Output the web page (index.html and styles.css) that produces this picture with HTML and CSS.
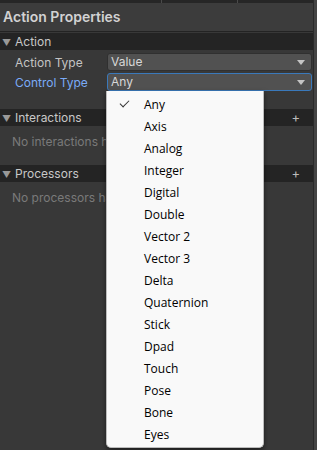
FILE: index.html
```html
<!DOCTYPE html>
<html lang="en">
<head>
  <meta charset="UTF-8" />
  <title>Action Properties</title>
  <link rel="stylesheet" href="styles.css">
</head>
<body>

<div class="window">
  <div class="inspector">
    <div class="tabstrip"><span></span><span></span></div>
    <div class="title">Action Properties</div>

    <div class="foldout">
      <span class="arrow">&#9660;</span>Action
    </div>
    <div class="row">
      <span class="label">Action Type</span>
      <div class="field">Value<span class="caret"></span></div>
    </div>
    <div class="row">
      <span class="label focused">Control Type</span>
      <div class="field focused">Any<span class="caret"></span></div>
    </div>

    <div class="foldout gap">
      <span class="arrow">&#9660;</span>Interactions
      <span class="plus">+</span>
    </div>
    <div class="empty">No interactions have been added.</div>

    <div class="foldout">
      <span class="arrow">&#9660;</span>Processors
      <span class="plus">+</span>
    </div>
    <div class="empty">No processors have been added.</div>
  </div>
  <div class="scrollbar"></div>

  <ul class="menu">
    <li class="checked">Any</li>
    <li>Axis</li>
    <li>Analog</li>
    <li>Integer</li>
    <li>Digital</li>
    <li>Double</li>
    <li>Vector 2</li>
    <li>Vector 3</li>
    <li>Delta</li>
    <li>Quaternion</li>
    <li>Stick</li>
    <li>Dpad</li>
    <li>Touch</li>
    <li>Pose</li>
    <li>Bone</li>
    <li>Eyes</li>
  </ul>
</div>

</body>
</html>
```

FILE: styles.css
```css
body {
  margin: 0;
  background: #383838;
  font-family: Inter, "Noto Sans", sans-serif;
  font-size: 12px;
  color: #c4c4c4;
}
.window {
  position: relative;
  display: flex;
  width: 317px;
  height: 450px;
  overflow: hidden;
}
.inspector {
  flex: 1;
  min-width: 0;
}
.scrollbar {
  width: 3px;
  border-left: 1px solid #2a2a2a;
  background: #444;
}

.tabstrip {
  height: 3px;
  background: #262626;
  display: flex;
  justify-content: flex-end;
}
.tabstrip span {
  width: 1px;
  margin-right: 75px;
  background: #4a4a4a;
}
.title {
  height: 28px;
  line-height: 28px;
  padding-left: 3px;
  font-size: 14px;
  font-weight: 600;
  color: #d2d2d2;
  background: #3c3c3c;
  border-bottom: 1px solid #232323;
}

.foldout {
  position: relative;
  height: 17px;
  line-height: 17px;
  margin-top: 1px;
  background: #242424;
  color: #c8c8c8;
  font-size: 12px;
}
.foldout.gap { margin-top: 18px; }
.arrow {
  display: inline-block;
  width: 15px;
  padding-left: 2px;
  box-sizing: border-box;
  font-size: 9px;
  color: #999;
}
.plus {
  position: absolute;
  right: 13px;
  top: 0;
  font-size: 13px;
  color: #bbb;
}

.row {
  display: flex;
  align-items: center;
  height: 18px;
  margin-top: 3px;
}
.row + .row { margin-top: 2px; }
.row:first-of-type { margin-top: 4px; }
.label {
  width: 92px;
  padding-left: 15px;
  color: #c4c4c4;
}
.label.focused { color: #7babf7; }
.field {
  position: relative;
  flex: 1;
  height: 16px;
  line-height: 16px;
  margin-right: 1px;
  padding-left: 3px;
  background: #515151;
  border: 1px solid #303030;
  border-radius: 3px;
  color: #d8d8d8;
}
.field.focused { border-color: #3a79bb; }
.caret {
  position: absolute;
  right: 6px;
  top: 6px;
  border-left: 4px solid transparent;
  border-right: 4px solid transparent;
  border-top: 5px solid #c4c4c4;
}

/* the popup covers the rest of these lines */
.empty {
  width: 94px;
  height: 38px;
  line-height: 32px;
  padding-left: 12px;
  color: #7a7a7a;
  white-space: nowrap;
  overflow: hidden;
}

.menu {
  position: absolute;
  left: 106px;
  top: 91px;
  width: 156px;
  margin: 0;
  padding: 3px 0 1px;
  list-style: none;
  background: #f9f9f9;
  border: 1px solid #bcbcbc;
  border-top: none;
  border-radius: 0 0 5px 5px;
  box-shadow: 0 2px 5px rgba(0,0,0,0.5);
  font-family: "Open Sans", "Noto Sans", sans-serif;
  font-size: 12px;
  color: #000;
}
.menu li {
  position: relative;
  height: 22px;
  line-height: 22px;
  padding-left: 37px;
}
.menu li.checked::before {
  content: "";
  position: absolute;
  left: 13px;
  top: 6px;
  width: 8px;
  height: 4px;
  border-left: 1px solid #333;
  border-bottom: 1px solid #333;
  transform: rotate(-45deg);
}
```
